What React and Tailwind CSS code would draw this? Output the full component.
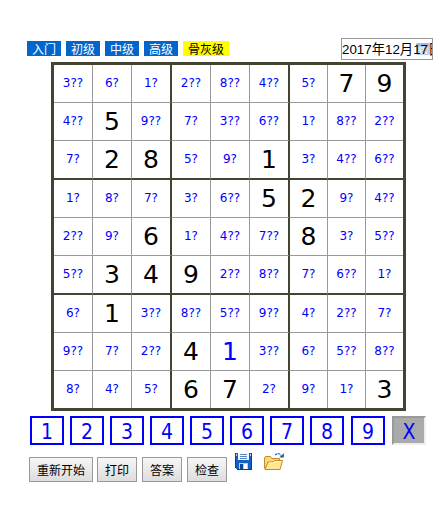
import React from 'react';

const LEVELS = [
  ['入门', 'w-[34px]'],
  ['初级', 'w-[34px]'],
  ['中级', 'w-[34px]'],
  ['高级', 'w-[34px]'],
];

// Guessed cells end in question marks; "u" marks a number entered by the player.
const ROWS = [
  ['3??', '6?', '1?', '2??', '8??', '4??', '5?', '7', '9'],
  ['4??', '5', '9??', '7?', '3??', '6??', '1?', '8??', '2??'],
  ['7?', '2', '8', '5?', '9?', '1', '3?', '4??', '6??'],
  ['1?', '8?', '7?', '3?', '6??', '5', '2', '9?', '4??'],
  ['2??', '9?', '6', '1?', '4??', '7??', '8', '3?', '5??'],
  ['5??', '3', '4', '9', '2??', '8??', '7?', '6??', '1?'],
  ['6?', '1', '3??', '8??', '5??', '9??', '4?', '2??', '7?'],
  ['9??', '7?', '2??', '4', '1u', '3??', '6?', '5??', '8??'],
  ['8?', '4?', '5?', '6', '7', '2?', '9?', '1?', '3'],
];

function Cell({ value, row, col }) {
  const guess = value.includes('?');
  const user = value.endsWith('u');
  const right = col === 8 ? '' : col % 3 === 2 ? 'border-r-2 border-r-[#444433]' : 'border-r border-r-[#999999]';
  const bottom = row === 8 ? '' : row % 3 === 2 ? 'border-b-2 border-b-[#444433]' : 'border-b border-b-[#999999]';
  const text = guess
    ? 'text-[12px] text-[#0000ff] pb-[2px]'
    : user
      ? 'text-[25px] text-[#0000ff]'
      : 'text-[25px] text-black';
  return (
    <div className={`flex items-center justify-center leading-none ${right} ${bottom} ${text}`}>
      {value.replace('u', '')}
    </div>
  );
}

function Floppy() {
  return (
    <svg width="19" height="19" viewBox="0 0 19 19" shapeRendering="crispEdges">
      <path d="M1 1h17v17H3l-2-2z" fill="#1460c4" />
      <path d="M1 1h1v15H1zM2 17h16v1H3zM17 1h1v17h-1z" fill="#0a3f8f" />
      <path d="M4 1h11v7H4z" fill="#f4f8ff" />
      <path d="M6 2h7v1H6zM6 4h7v1H6zM6 6h7v1H6z" fill="#5b86c2" />
      <path d="M5 11h9v6H5z" fill="#b9cdea" />
      <path d="M6 12h3v5H6z" fill="#0e489c" />
      <path d="M10 12h3v5h-3z" fill="#ffffff" />
      <path d="M16 2h1v2h-1zM2 2h1v2H2z" fill="#bcd3f4" />
    </svg>
  );
}

function Folder() {
  return (
    <svg width="22" height="20" viewBox="0 0 22 20">
      <path d="M1.5 16.5V6l1-1.5h5L9 6.5h7.5v3" fill="#f6d77c" stroke="#c58a24" />
      <path d="M2 17.5 5 10h5l1.5-1.500h8L17 17.500z" fill="#ffe691" stroke="#c58a24" strokeLinejoin="round" />
      <path d="M6 11h4.500L12 9.500h6" fill="none" stroke="#fff6ca" />
      <path d="M12 3.200c1.600-2 4.400-2.200 6 .2" fill="none" stroke="#3f70b5" strokeWidth="1.3" strokeDasharray="2.5 .6" />
      <path d="M20.800 1.200v4.300h-4.500z" fill="#244f99" />
    </svg>
  );
}

function CalendarIcon() {
  return (
    <svg width="15" height="13" viewBox="0 0 15 13">
      <rect x="0" y="0" width="14" height="12" rx="1.5" fill="#b9cee9" />
      <path d="M0 1.5A1.5 1.5 0 0 1 1.5 0h11A1.5 1.5 0 0 1 14 1.5V3H0z" fill="#9fbce2" />
      <path d="M2 5h10M2 7.5h10M2 10h10M4.5 4v7M7.5 4v7M10.5 4v7" stroke="#e6effa" />
      <path d="M8 5.5h3v3H8z" fill="#efb9a7" />
    </svg>
  );
}

export default function App() {
  return (
    <div className="h-[520px] w-[444px] overflow-hidden bg-white font-['DejaVu_Sans',sans-serif]">
      <div className="flex h-[62px] items-start pl-[27px] pt-[38px]">
        <div className="mt-[3px] flex w-[314px] gap-[5px] font-['Noto_Sans_CJK_SC',sans-serif] text-[12px] leading-[15px]">
          {LEVELS.map(([label, width]) => (
            <div key={label} className={`h-[15px] bg-[#0066cc] text-center text-white ${width}`}>
              {label}
            </div>
          ))}
          <div className="h-[15px] w-[46px] bg-[#ffff00] text-center text-black">骨灰级</div>
        </div>
        <div className="relative h-[22px] w-[92px] overflow-hidden border border-[#999999] bg-white">
          <div className="absolute left-[74px] top-[4px]">
            <CalendarIcon />
          </div>
          <div className="relative whitespace-nowrap font-['Liberation_Sans','Noto_Sans_CJK_SC',sans-serif] text-[13.33px] leading-[21px] text-black">
            2017年12月17日
          </div>
        </div>
      </div>

      <div className="ml-[51px] grid h-[349px] w-[355px] grid-cols-[39px_39px_40px_39px_39px_40px_38px_38px_37px] grid-rows-[38px_38px_39px_38px_38px_39px_38px_38px_37px] border-[3px] border-[#444433]">
        {ROWS.map((cells, row) =>
          cells.map((value, col) => <Cell key={`${row}-${col}`} value={value} row={row} col={col} />)
        )}
      </div>

      <div className="ml-[30px] mt-[5px] flex font-['DejaVu_Sans_Condensed','DejaVu_Sans',sans-serif] text-[21px] leading-[28px] text-[#0000ff]">
        {[1, 2, 3, 4, 5, 6, 7, 8].map((n) => (
          <div key={n} className="mr-[6px] h-[29px] w-[34px] border-2 border-[#0000ff] text-center">
            {n}
          </div>
        ))}
        <div className="ml-[1px] h-[29px] w-[34px] border-2 border-[#0000ff] text-center">9</div>
        <div className="ml-[7px] h-[29px] w-[34px] border-2 border-b-[#eeeeee] border-l-[#999999] border-r-[#eeeeee] border-t-[#999999] bg-[#aaaaaa] text-center">
          X
        </div>
      </div>

      <div className="ml-[29px] mt-[7px] flex items-start font-['Noto_Sans_CJK_SC',sans-serif] text-[12px] leading-[23px] text-black">
        {[
          ['重新开始', 'w-[64px] mr-[4px]'],
          ['打印', 'w-[40px] mr-[5px]'],
          ['答案', 'w-[40px] mr-[5px]'],
          ['检查', 'w-[40px] mr-[7px]'],
        ].map(([label, size]) => (
          <button
            key={label}
            className={`mt-[5px] flex h-[25px] items-start justify-center whitespace-nowrap border border-[#999999] bg-linear-to-b from-[#f6f6f6] to-[#dddddd] ${size}`}
          >
            {label}
          </button>
        ))}
        <Floppy />
        <div className="ml-[10px]">
          <Folder />
        </div>
      </div>
    </div>
  );
}
